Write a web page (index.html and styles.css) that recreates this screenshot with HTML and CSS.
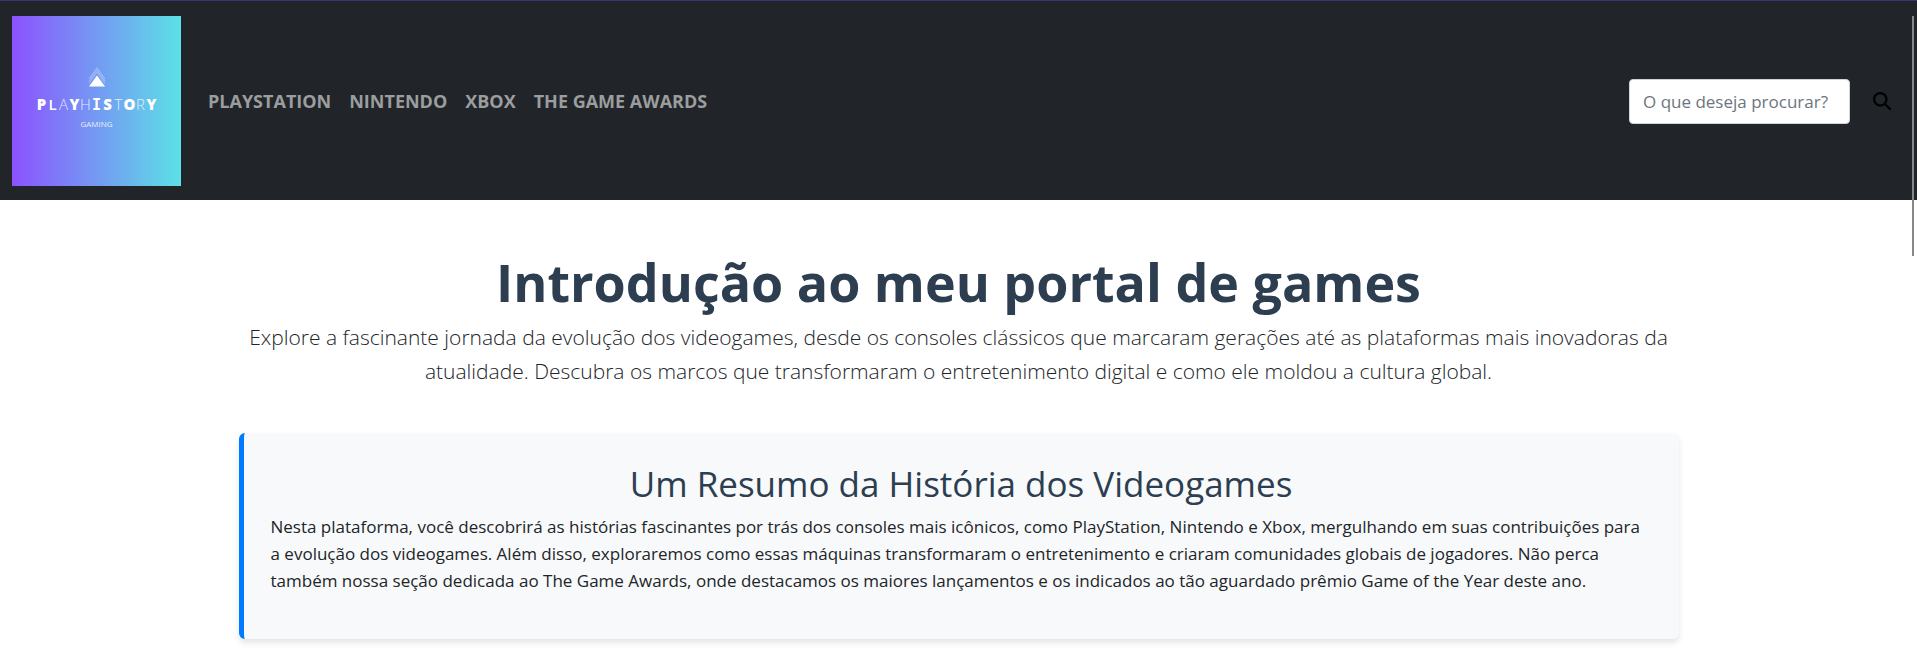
FILE: index.html
```html
<!DOCTYPE html>
<html lang="pt-BR">
<head>
<meta charset="utf-8">
<meta name="viewport" content="width=device-width, initial-scale=1">
<title>PlayHistory Gaming</title>
<link rel="stylesheet" href="styles.css">
</head>
<body>
<header class="navbar">
  <a class="brand" href="#">
    <svg class="brand-mark" viewBox="0 0 18 20" aria-hidden="true">
      <g fill="none" stroke="#fff" stroke-opacity=".6" stroke-width=".6">
        <path d="M1 12 9 .8 17 12"/>
        <path d="M1 14.200 9 3 17 14.200"/>
        <path d="M1 16.400 9 5.200 17 16.400"/>
      </g>
      <path d="M9 8.400 17 19.400H1Z" fill="#fff"/>
    </svg>
    <span class="brand-name"><b>P</b><em>L</em><i>A</i><b>Y</b><i>H</i><b class="slab">I</b><b>S</b><i>T</i><b>O</b><i>R</i><b>Y</b></span>
    <span class="brand-sub">GAMING</span>
  </a>
  <nav class="nav">
    <a class="nav-link" href="#">PLAYSTATION</a>
    <a class="nav-link" href="#">NINTENDO</a>
    <a class="nav-link" href="#">XBOX</a>
    <a class="nav-link" href="#">THE GAME AWARDS</a>
  </nav>
  <form class="search">
    <input class="search-input" type="text" placeholder="O que deseja procurar?" aria-label="O que deseja procurar?">
    <button class="search-button" type="button" aria-label="Procurar">
      <svg class="search-icon" viewBox="0 0 512 512" aria-hidden="true"><path d="M416 208c0 45.900-14.900 88.300-40 122.700L502.600 457.400c12.500 12.500 12.500 32.800 0 45.300s-32.800 12.500-45.300 0L330.700 376c-34.400 25.200-76.800 40-122.700 40C93.100 416 0 322.900 0 208S93.100 0 208 0S416 93.100 416 208zM208 352a144 144 0 1 0 0-288 144 144 0 1 0 0 288z"/></svg>
    </button>
  </form>
</header>
<main class="content">
  <section class="intro">
    <h1 class="intro-title">Introdução ao meu portal de games</h1>
    <p class="lead">Explore a fascinante jornada da evolução dos videogames, desde os consoles clássicos que marcaram gerações até as plataformas mais inovadoras da atualidade. Descubra os marcos que transformaram o entretenimento digital e como ele moldou a cultura global.</p>
  </section>
  <section class="card">
    <h2 class="card-title">Um Resumo da História dos Videogames</h2>
    <p class="card-text">Nesta plataforma, você descobrirá as histórias fascinantes por trás dos consoles mais icônicos, como PlayStation, Nintendo e Xbox, mergulhando em suas contribuições para a evolução dos videogames. Além disso, exploraremos como essas máquinas transformaram o entretenimento e criaram comunidades globais de jogadores. Não perca também nossa seção dedicada ao The Game Awards, onde destacamos os maiores lançamentos e os indicados ao tão aguardado prêmio Game of the Year deste ano.</p>
  </section>
</main>
<div class="scroll-thumb"></div>
</body>
</html>
```
FILE: styles.css
```css
* { box-sizing: border-box; }

body {
  margin: 0;
  background: #fff;
  color: #212529;
  font-family: "Segoe UI", "Open Sans", "Noto Sans", sans-serif;
  font-size: 17px;
  line-height: 27px;
}

.navbar {
  display: flex;
  align-items: center;
  padding: 15px 12px 14px;
  border-top: 1px solid #3b3478;
  background: #212529;
}

.brand {
  display: flex;
  flex-direction: column;
  align-items: center;
  width: 169px;
  height: 170px;
  padding-top: 51px;
  margin-right: 18px;
  background: linear-gradient(90deg, #8c52ff, #5ce1e6);
  color: #fff;
  text-decoration: none;
}

.brand-mark { width: 18px; height: 20px; }

.brand-name {
  display: grid;
  grid-template-columns: repeat(11, 11px);
  align-items: baseline;
  justify-items: center;
  height: 20px;
  margin-top: 7px;
  font-size: 15px;
  line-height: 20px;
}

.brand-name b { font-weight: 800; }
.brand-name em { font-style: normal; font-weight: 600; }
.brand-name i { font-style: normal; font-weight: 300; opacity: .8; }
.brand-name .slab { font-family: "DejaVu Sans Mono", monospace; }

.brand-sub {
  margin-top: 4px;
  font-size: 8px;
  line-height: 12px;
  opacity: .85;
}

.nav { display: flex; flex: 1; }

.nav-link {
  padding: 9px;
  color: #9b9d9e;
  font-size: 18px;
  font-weight: 700;
  text-decoration: none;
}

.search { display: flex; align-items: center; gap: 9px; }

.search-input {
  width: 221px;
  height: 45px;
  padding: 6px 13px;
  border: 1px solid #ced4da;
  border-radius: 4px;
  background: #fff;
  color: #212529;
  font: inherit;
}

.search-input::placeholder { color: #6c757d; opacity: 1; }

.search-button {
  display: flex;
  padding: 14px;
  border: 0;
  background: none;
}

.search-icon { width: 18px; height: 18px; fill: #000; }

.content {
  width: 1440px;
  max-width: 100%;
  margin: 0 auto;
  padding: 49px 0 18px;
}

.intro { text-align: center; }

.intro-title {
  margin: 0 0 6px;
  color: #2c3e50;
  font-size: 52px;
  font-weight: 700;
  line-height: 65px;
}

.lead {
  margin: 0 0 45px;
  font-size: 21px;
  font-weight: 300;
  line-height: 34px;
}

.card {
  padding: 29px 27px 27px;
  border-left: 5px solid #007bff;
  border-radius: 6px;
  background: #f8f9fa;
  box-shadow: 0 4px 6px rgba(0, 0, 0, .1);
}

.card-title {
  margin: 0 0 8px;
  color: #2c3e50;
  font-size: 35px;
  font-weight: 400;
  line-height: 43px;
  text-align: center;
}

.card-text { margin: 0 0 18px; }

.scroll-thumb {
  position: absolute;
  top: 16px;
  right: 3px;
  width: 2px;
  height: 240px;
  background: #888;
}
```
